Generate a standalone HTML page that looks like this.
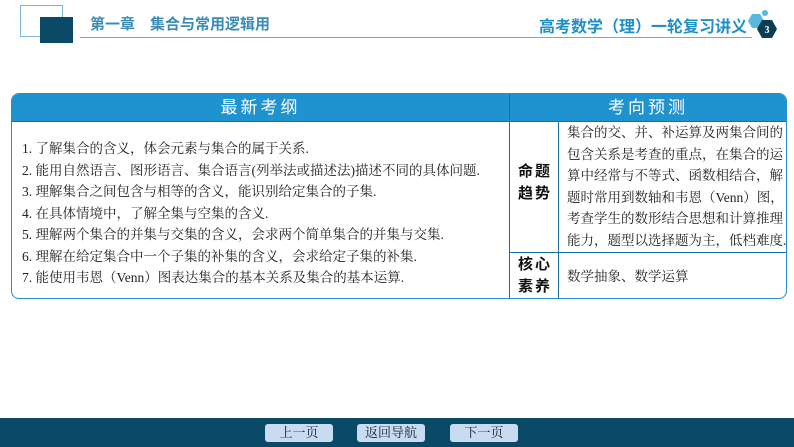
<!DOCTYPE html>
<html><head><meta charset="utf-8"><style>
body{margin:0;width:794px;height:447px;position:relative;background:#fff;overflow:hidden;font-family:"Liberation Serif","Noto Serif CJK SC",serif}
.a{position:absolute}
.hd{color:#3a8cb5;font-family:"Liberation Sans","Noto Sans CJK SC",sans-serif;font-size:15px;font-weight:bold}
.tb{position:absolute;left:11px;top:93px;width:774px;height:204px;border:1px solid #2a8ccc;border-radius:8px;overflow:hidden}
.th{position:absolute;top:0;height:27px;background:#1f92d0;color:#fff;font-family:"Liberation Sans","Noto Sans CJK SC",sans-serif;font-size:17px;letter-spacing:3px;text-align:center;line-height:27px;border-bottom:1px solid #1a6fa0}
.lt{position:absolute;left:10px;top:44px;font-size:13.5px;line-height:21.5px;color:#222;white-space:nowrap}
.lab{position:absolute;font-family:"Liberation Sans","Noto Sans CJK SC",sans-serif;font-size:15px;font-weight:bold;line-height:22px;letter-spacing:2px;color:#111;text-align:center;width:50px}
.btn{position:absolute;top:424px;width:68px;height:18px;background:#c7dcf1;border-radius:3px;font-size:13px;color:#123;text-align:center;line-height:18px}
</style></head><body>
<div class="a" style="left:20px;top:5px;width:41px;height:30px;border:1px solid #7ab8d0"></div>
<div class="a" style="left:40px;top:17px;width:33px;height:26px;background:#0b4a66"></div>
<div class="a" style="left:80px;top:37px;width:672px;height:1px;background:#5ab4d4"></div>
<div class="a hd" style="left:90px;top:13px">第一章　集合与常用逻辑用</div>
<div class="a hd" style="left:539px;top:13px;color:#1f8fc8;font-size:16px">高考数学（理）一轮复习讲义</div>
<svg class="a" style="left:744px;top:5px" width="45" height="35" viewBox="0 0 45 35">
<polygon points="4,16 8,9 16,9 20,16 16,23 8,23" fill="#5ab8e0"/>
<circle cx="21" cy="8" r="3" fill="#5ab8e0"/>
<polygon points="13,24 18,15 28,15 33,24 28,33 18,33" fill="#0b3d55"/>
<text x="23" y="28" font-size="10" fill="#fff" text-anchor="middle" font-weight="bold">3</text>
</svg>
<div class="tb">
<div class="th" style="left:0;width:497px;border-right:1px solid #1a6fa0">最新考纲</div>
<div class="th" style="left:498px;width:276px">考向预测</div>
<div class="lt">1. 了解集合的含义，体会元素与集合的属于关系.<br>2. 能用自然语言、图形语言、集合语言(列举法或描述法)描述不同的具体问题.<br>3. 理解集合之间包含与相等的含义，能识别给定集合的子集.<br>4. 在具体情境中，了解全集与空集的含义.<br>5. 理解两个集合的并集与交集的含义，会求两个简单集合的并集与交集.<br>6. 理解在给定集合中一个子集的补集的含义，会求给定子集的补集.<br>7. 能使用韦恩（Venn）图表达集合的基本关系及集合的基本运算.</div>
<div class="a" style="left:497px;top:27px;width:1px;height:177px;background:#1a6fa0"></div>
<div class="a" style="left:546px;top:27px;width:1px;height:177px;background:#1a6fa0"></div>
<div class="a" style="left:497px;top:158px;width:277px;height:1px;background:#1a6fa0"></div>
<div class="lab" style="left:498px;top:67px">命题<br>趋势</div>
<div class="lab" style="left:498px;top:160px">核心<br>素养</div>
<div class="a" style="left:555px;top:28px;font-size:13.5px;line-height:21.6px;color:#222;white-space:nowrap">集合的交、并、补运算及两集合间的<br>包含关系是考查的重点，在集合的运<br>算中经常与不等式、函数相结合，解<br>题时常用到数轴和韦恩（Venn）图，<br>考查学生的数形结合思想和计算推理<br>能力，题型以选择题为主，低档难度.</div>
<div class="a" style="left:555px;top:171px;font-size:13.5px;color:#222">数学抽象、数学运算</div>
</div>
<div class="a" style="left:0;top:418px;width:794px;height:29px;background:#0b4a66"></div>
<div class="btn" style="left:265px">上一页</div>
<div class="btn" style="left:357px">返回导航</div>
<div class="btn" style="left:450px">下一页</div>
</body></html>
